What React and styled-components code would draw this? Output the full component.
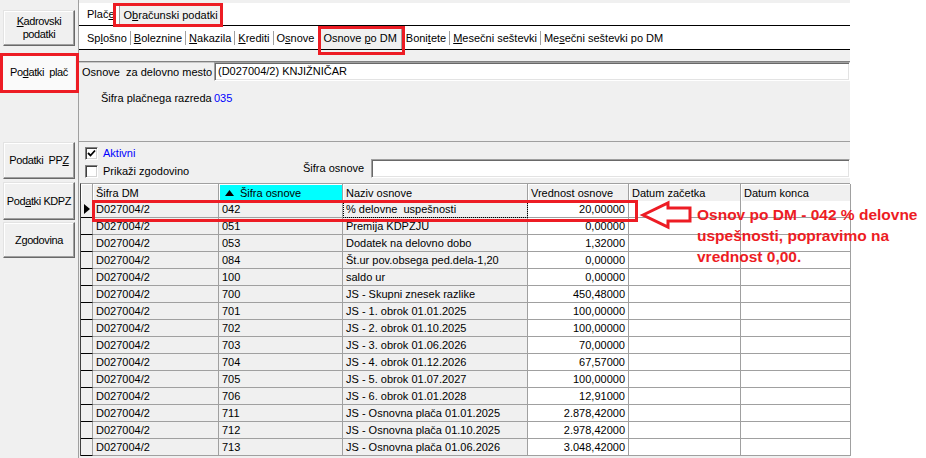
import styled, { createGlobalStyle } from "styled-components";

const RED = "#ed1c24";

const GlobalStyle = createGlobalStyle`
  body {
    margin: 0;
    background: #fff;
    font-family: "Liberation Sans", Arial, sans-serif;
    font-size: 11px;
    color: #000;
  }
`;

const Screen = styled.div`
  position: relative;
  width: 926px;
  height: 458px;
  overflow: hidden;
  background: #fff;
`;

const Window = styled.div`
  display: flex;
  width: 850px;
  height: 458px;
  background: #f0f0f0;
`;

const Sidebar = styled.div`
  width: 79px;
  flex-shrink: 0;
  box-sizing: border-box;
  border-right: 1px solid #a0a0a0;
  display: flex;
  flex-direction: column;
  align-items: center;
`;

const SideButton = styled.div`
  width: 72px;
  height: ${(p) => p.$h}px;
  margin-top: ${(p) => p.$top}px;
  box-sizing: border-box;
  display: flex;
  align-items: center;
  justify-content: center;
  text-align: center;
  line-height: 13px;
  letter-spacing: -0.4px;
  white-space: pre;
  background: ${(p) => (p.$active ? "#fafafa" : "#f0f0f0")};
  border: 1px solid;
  border-color: ${(p) =>
    p.$active ? "transparent" : "#e3e3e3 #696969 #696969 #e3e3e3"};
  box-shadow: ${(p) =>
    p.$active ? "none" : "inset -1px -1px #a0a0a0, inset 1px 1px #fff"};
`;

const Key = styled.u`
  text-decoration-thickness: 1px;
  text-underline-offset: 1px;
`;

const Main = styled.div`
  flex: 1;
  display: flex;
  flex-direction: column;
  min-width: 0;
`;

const TopStrip = styled.div`
  height: 3px;
  background: #f0f0f0;
`;

const TabStrip = styled.div`
  display: flex;
  align-items: flex-end;
  height: ${(p) => p.$h}px;
  background: #fff;
  border-bottom: 1px solid #000;
  padding-left: 5px;
`;

const Tab = styled.div`
  padding: 0 3px;
  height: 15px;
  line-height: 15px;
  margin-bottom: ${(p) => p.$mb}px;
  white-space: nowrap;
`;

const ActiveTab = styled.div`
  padding: 0 4px;
  height: ${(p) => p.$h}px;
  line-height: ${(p) => p.$h}px;
  margin: 0 1px;
  background: #f0f0f0;
  border: 1px solid #a0a0a0;
  border-bottom: none;
  white-space: nowrap;
`;

const Sep = styled.div`
  width: 1px;
  height: 14px;
  margin-bottom: ${(p) => p.$mb}px;
  background: #a0a0a0;
`;

const Band = styled.div`
  height: 11px;
  background: #f0f0f0;
  border-bottom: 1px solid #808080;
  box-shadow: 0 1px #c8c8c8;
`;

const FieldRow = styled.div`
  display: flex;
  align-items: center;
  height: ${(p) => p.$h}px;
  margin-top: ${(p) => p.$top || 0}px;
`;

const Label = styled.div`
  width: 135px;
  flex-shrink: 0;
  box-sizing: border-box;
  padding-left: ${(p) => p.$indent}px;
  white-space: pre;
`;

const Input = styled.div`
  flex: 1;
  height: 19px;
  box-sizing: border-box;
  background: #fff;
  border: 1px solid;
  border-color: #a0a0a0 #fff #fff #a0a0a0;
  box-shadow: inset 1px 1px #696969, inset -1px -1px #e3e3e3;
  padding-left: 3px;
  line-height: 17px;
  white-space: pre;
`;

const Value = styled.span`
  color: #0000ff;
`;

const FilterPanel = styled.div`
  display: flex;
  align-items: flex-end;
  margin-top: 35px;
  border-top: 1px solid #a0a0a0;
  padding: 4px 0 5px 6px;
`;

const CheckCol = styled.div`
  width: 218px;
  display: flex;
  flex-direction: column;
  gap: 4px;
`;

const CheckRow = styled.div`
  display: flex;
  align-items: center;
  gap: 5px;
  height: 14px;
  color: ${(p) => (p.$blue ? "#0000ff" : "#000")};
`;

const Box = styled.div`
  width: 13px;
  height: 13px;
  box-sizing: border-box;
  background: #fff;
  border: 1px solid;
  border-color: #808080 #fff #fff #808080;
  box-shadow: inset 1px 1px #404040, inset -1px -1px #d4d4d4;
  display: flex;
  align-items: center;
  justify-content: center;
`;

const FilterLabel = styled.div`
  width: 68px;
  flex-shrink: 0;
  line-height: 19px;
`;

const Grid = styled.div`
  display: grid;
  grid-template-columns: 12px 126px 124px 185px 101px 112px 110px;
  grid-auto-rows: 17px;
  margin-left: 1px;
  border-top: 1px solid #a0a0a0;
  border-left: 1px solid #404040;
  background: #fff;
`;

const HeadCell = styled.div`
  box-sizing: border-box;
  display: flex;
  align-items: center;
  gap: 6px;
  height: 18px;
  padding-left: ${(p) => (p.$sorted ? 6 : 3)}px;
  background: ${(p) => (p.$sorted ? "#00ffff" : "#f0f0f0")};
  border-right: 1px solid #a0a0a0;
  border-bottom: 1px solid #a0a0a0;
  box-shadow: inset 1px 1px #fff;
  white-space: nowrap;
`;

const Indicator = styled.div`
  box-sizing: border-box;
  display: flex;
  align-items: center;
  justify-content: center;
  background: #f0f0f0;
  border-right: 1px solid #a0a0a0;
  border-bottom: 1px solid #000;
`;

const Cell = styled.div`
  box-sizing: border-box;
  padding: 0 3px;
  line-height: 16px;
  white-space: pre;
  overflow: hidden;
  text-align: ${(p) => (p.$right ? "right" : "left")};
  background: ${(p) => (p.$ro ? "#f0f0f0" : "#fff")};
  border-right: 1px solid #a0a0a0;
  border-bottom: 1px solid #a0a0a0;
  outline: ${(p) => (p.$focus ? "1px dotted #000" : "none")};
  outline-offset: -1px;
`;

const Mark = styled.div`
  position: absolute;
  left: ${(p) => p.$x}px;
  top: ${(p) => p.$y}px;
  width: ${(p) => p.$w}px;
  height: ${(p) => p.$h}px;
  box-sizing: border-box;
  border: 3px solid ${RED};
  pointer-events: none;
`;

const Arrow = styled.svg`
  position: absolute;
  left: 638px;
  top: 199px;
`;

const Note = styled.div`
  position: absolute;
  left: 697px;
  top: 204px;
  font-family: "Liberation Sans", Arial, sans-serif;
  font-weight: bold;
  font-size: 15.5px;
  line-height: 21px;
  color: ${RED};
  white-space: nowrap;
`;

const ROWS = [
  ["042", "% delovne  uspešnosti", "20,00000"],
  ["051", "Premija KDPZJU", "0,00000"],
  ["053", "Dodatek na delovno dobo", "1,32000"],
  ["084", "Št.ur pov.obsega ped.dela-1,20", "0,00000"],
  ["100", "saldo ur", "0,00000"],
  ["700", "JS - Skupni znesek razlike", "450,48000"],
  ["701", "JS - 1. obrok 01.01.2025", "100,00000"],
  ["702", "JS - 2. obrok 01.10.2025", "100,00000"],
  ["703", "JS - 3. obrok 01.06.2026", "70,00000"],
  ["704", "JS - 4. obrok 01.12.2026", "67,57000"],
  ["705", "JS - 5. obrok 01.07.2027", "100,00000"],
  ["706", "JS - 6. obrok 01.01.2028", "12,91000"],
  ["711", "JS - Osnovna plača 01.01.2025", "2.878,42000"],
  ["712", "JS - Osnovna plača 01.10.2025", "2.978,42000"],
  ["713", "JS - Osnovna plača 01.06.2026", "3.048,42000"],
];

const SUB_TABS = [
  ["Sp", "l", "ošno"],
  ["", "B", "oleznine"],
  ["", "N", "akazila"],
  ["", "K", "rediti"],
  ["O", "s", "nove"],
];

const AFTER_TABS = [
  ["Boni", "t", "ete"],
  ["", "M", "esečni seštevki"],
  ["Me", "s", "ečni seštevki po DM"],
];

const Labeled = ({ parts }) => (
  <>
    {parts[0]}
    <Key>{parts[1]}</Key>
    {parts[2]}
  </>
);

const App = () => {
  return (
    <Screen>
      <GlobalStyle />
      <Window>
        <Sidebar>
          <SideButton $h={36} $top={10}>
            <span>
              <Key>K</Key>adrovski{"\n"}podatki
            </span>
          </SideButton>
          <SideButton $h={35} $top={9} $active>
            <span>
              Po<Key>d</Key>atki  plač
            </span>
          </SideButton>
          <SideButton $h={37} $top={52}>
            <span>
              Podatki  PP<Key>Z</Key>
            </span>
          </SideButton>
          <SideButton $h={38} $top={3}>
            <span>
              Pod<Key>a</Key>tki KDPZ
            </span>
          </SideButton>
          <SideButton $h={36} $top={2}>
            <span>Zgodovina</span>
          </SideButton>
        </Sidebar>

        <Main>
          <TopStrip />
          <TabStrip $h={22}>
            <Tab $mb={3}>
              Plač<Key>e</Key>
            </Tab>
            <ActiveTab $h={19}>
              O<Key>b</Key>računski podatki
            </ActiveTab>
          </TabStrip>
          <TabStrip $h={23}>
            {SUB_TABS.map((t, i) => (
              <span key={t.join("")} style={{ display: "contents" }}>
                {i > 0 && <Sep $mb={4} />}
                <Tab $mb={3}>
                  <Labeled parts={t} />
                </Tab>
              </span>
            ))}
            <ActiveTab $h={21}>
              Osnove <Key>p</Key>o DM
            </ActiveTab>
            {AFTER_TABS.map((t, i) => (
              <span key={t.join("")} style={{ display: "contents" }}>
                {i > 0 && <Sep $mb={4} />}
                <Tab $mb={3}>
                  <Labeled parts={t} />
                </Tab>
              </span>
            ))}
          </TabStrip>
          <Band />

          <FieldRow $h={19}>
            <Label $indent={3}>Osnove  za delovno mesto</Label>
            <Input>(D027004/2) KNJIŽNIČAR</Input>
          </FieldRow>
          <FieldRow $h={17} $top={8}>
            <Label $indent={22}>Šifra plačnega razreda</Label>
            <Value>035</Value>
          </FieldRow>

          <FilterPanel>
            <CheckCol>
              <CheckRow $blue>
                <Box>
                  <svg width="9" height="9" viewBox="0 0 9 9">
                    <path d="M1 4 L3.5 6.5 L8 1.5" fill="none" stroke="#000" strokeWidth="1.8" />
                  </svg>
                </Box>
                Aktivni
              </CheckRow>
              <CheckRow>
                <Box />
                Prikaži zgodovino
              </CheckRow>
            </CheckCol>
            <FilterLabel>Šifra osnove</FilterLabel>
            <Input />
          </FilterPanel>

          <Grid>
            <HeadCell />
            <HeadCell>Šifra DM</HeadCell>
            <HeadCell $sorted>
              <svg width="9" height="6" viewBox="0 0 9 6">
                <path d="M0 6 L4.5 0 L9 6 Z" fill="#000" />
              </svg>
              Šifra osnove
            </HeadCell>
            <HeadCell>Naziv osnove</HeadCell>
            <HeadCell>Vrednost osnove</HeadCell>
            <HeadCell>Datum začetka</HeadCell>
            <HeadCell>Datum konca</HeadCell>
            {ROWS.map(([code, name, value], i) => (
              <span key={code} style={{ display: "contents" }}>
                <Indicator>
                  {i === 0 && (
                    <svg width="6" height="10" viewBox="0 0 6 10">
                      <path d="M0 0 L6 5 L0 10 Z" fill="#000" />
                    </svg>
                  )}
                </Indicator>
                <Cell $ro>D027004/2</Cell>
                <Cell $ro>{code}</Cell>
                <Cell $ro $focus={i === 0}>
                  {name}
                </Cell>
                <Cell $right>{value}</Cell>
                <Cell />
                <Cell />
              </span>
            ))}
          </Grid>
        </Main>
      </Window>

      <Mark $x={113} $y={3} $w={110} $h={24} />
      <Mark $x={318} $y={26} $w={87} $h={29} />
      <Mark $x={0} $y={53} $w={79} $h={40} />
      <Mark $x={92} $y={200} $w={546} $h={22} />

      <Arrow width="56" height="32" viewBox="0 0 56 32">
        <path
          d="M5 16 L30 4 L30 9 L52 9 L52 22 L30 22 L30 28 Z"
          fill="#fff"
          stroke={RED}
          strokeWidth="3"
          strokeLinejoin="miter"
        />
      </Arrow>
      <Note>
        Osnov po DM - 042 % delovne
        <br />
        uspešnosti, popravimo na
        <br />
        vrednost 0,00.
      </Note>
    </Screen>
  );
};

export default App;
